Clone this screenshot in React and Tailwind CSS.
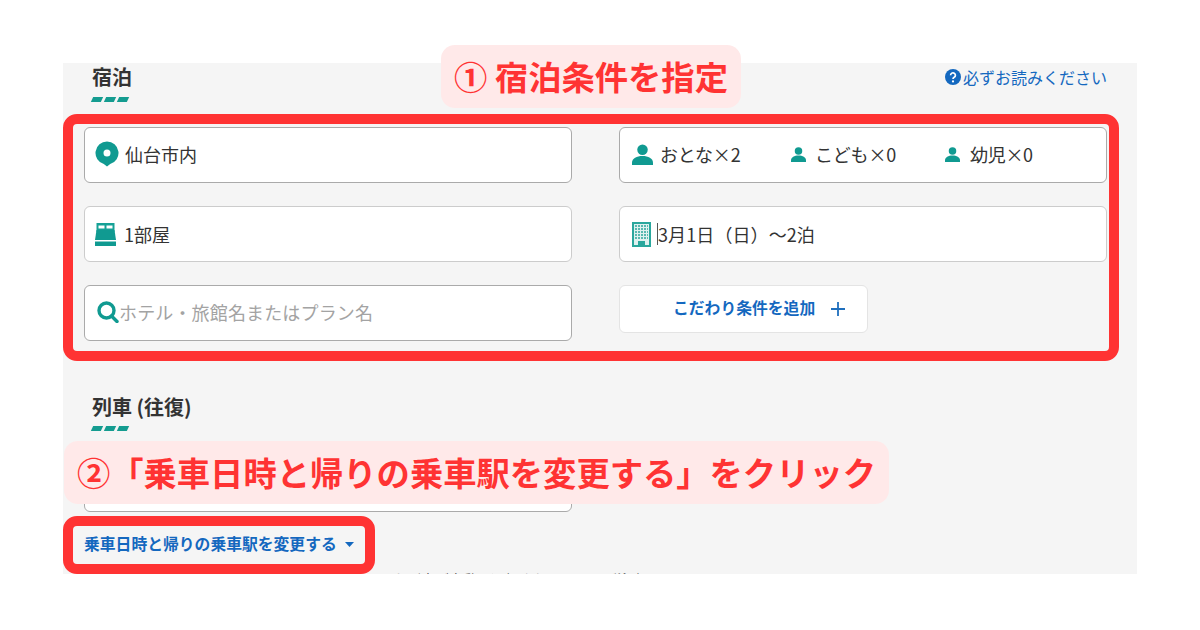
const jpFont = "font-['Noto_Sans_CJK_JP','Noto_Sans',sans-serif]";

const Bars = ({ className = "mt-[6px]" }) => (
  <div className={`flex gap-[3px] ml-2 ${className}`}>
    <span className="w-[10px] h-[5px] bg-[#149c90] -skew-x-[25deg]" />
    <span className="w-[10px] h-[5px] bg-[#149c90] -skew-x-[25deg]" />
    <span className="w-[10px] h-[5px] bg-[#149c90] -skew-x-[25deg]" />
  </div>
);

const Heading = ({ children }) => (
  <h2 className="ml-2 text-[20px] leading-[28px] font-bold text-[#333]">{children}</h2>
);

const Field = ({ children, className = "border-[#aaaaaa] pb-[2px]" }) => (
  <div className={`h-14 flex items-center rounded-[6px] border bg-white text-[18px] text-[#333] ${className}`}>
    {children}
  </div>
);

const PinIcon = () => (
  <svg width="24" height="26" viewBox="0 0 24 26" className="ml-[10px] shrink-0">
    <path fill="#109a91" fillRule="evenodd" d="M12 0.500a11.500 11.500 0 0 1 3.200 22.550L12 25.500l-3.200-2.450A11.500 11.500 0 0 1 12 0.500Zm0 8a3.500 3.500 0 1 0 0 7 3.500 3.500 0 0 0 0-7Z" />
  </svg>
);

const PersonIcon = ({ size }) => (
  <svg width={size} height={size} viewBox="0 0 22 22" className="shrink-0">
    <circle cx="11" cy="6" r="5.500" fill="#109a91" />
    <path fill="#109a91" d="M0 22v-2.500C0 15 5 12.500 11 12.500s11 2.500 11 7V22Z" />
  </svg>
);

const BedIcon = () => (
  <svg width="21" height="23" viewBox="0 0 21 23" className="ml-[10px] shrink-0">
    <path fill="#15a196" d="M1.500 0h18v9h-18Z" />
    <path fill="#fff" d="M3.500 2.500h6v3h-6ZM11.500 2.500h6v3h-6Z" />
    <path fill="#109a91" d="M1.500 7h18l1.500 10H0Z" />
    <path fill="#109a91" d="M0 18.500h21V23H0Z" />
  </svg>
);

const BuildingIcon = () => (
  <svg width="19" height="25" viewBox="0 0 19 25" className="ml-3 shrink-0">
    <path fill="#2aa79d" d="M0 0h19v25H0Z" />
    <path fill="#dff1ef" d="M2 2h15v21H2Z" />
    <path stroke="#58b8b0" strokeWidth="2" strokeDasharray="2 1" fill="none" d="M3 4h13M3 7h13M3 10h13M3 13h13M3 16h13" />
    <path fill="#2aa79d" d="M6 19h7v6H6Z" />
  </svg>
);

const SearchIcon = () => (
  <svg width="22" height="22" viewBox="0 0 22 22" fill="none" stroke="#109a91" className="ml-3 shrink-0">
    <circle cx="9.500" cy="9.500" r="7.500" strokeWidth="3.400" />
    <path d="M14.500 15l5.500 5.500" strokeWidth="3.400" strokeLinecap="round" />
  </svg>
);

const HelpIcon = () => (
  <svg width="16" height="16" viewBox="0 0 16 16" className="shrink-0">
    <circle cx="8" cy="8" r="8" fill="#1468bf" />
    <path d="M5.600 6.200a2.400 2.400 0 1 1 3.600 2.100c-.8.450-1.200.8-1.200 1.700" fill="none" stroke="#fff" strokeWidth="1.700" />
    <circle cx="8" cy="12.400" r="1.100" fill="#fff" />
  </svg>
);

export default function App() {
  return (
    <div className={`relative w-[1200px] h-[630px] overflow-hidden bg-white pt-[63px] pl-[63px] ${jpFont}`}>
      <section className="w-[1074px] h-[511px] overflow-hidden bg-[#f5f5f5] pl-[21px]">
        <div className="flex justify-between pr-[30px]">
          <Heading>宿泊</Heading>
          <a className="flex items-center gap-[2px] h-[28px] text-[16px] leading-[28px] text-[#1468bf]">
            <HelpIcon />
            必ずお読みください
          </a>
        </div>
        <Bars />

        <div className="grid grid-cols-[488px_488px] gap-x-[47px] gap-y-[23px] mt-[25px]">
          <Field>
            <PinIcon />
            <span className="ml-[6px]">仙台市内</span>
          </Field>
          <Field>
            <div className="flex items-center ml-3">
              <PersonIcon size={21} />
              <span className="ml-[7px] w-[131px] tracking-[-0.2px]">おとな×2</span>
              <PersonIcon size={15} />
              <span className="ml-[9px] w-[130px] tracking-[-0.2px]">こども×0</span>
              <PersonIcon size={15} />
              <span className="ml-[10px] tracking-[-0.3px]">幼児×0</span>
            </div>
          </Field>
          <Field className="border-[#cccccc]">
            <BedIcon />
            <span className="ml-2">1部屋</span>
          </Field>
          <Field className="border-[#cccccc]">
            <BuildingIcon />
            <span className="ml-[6px] w-px h-[22px] bg-[#555]" />
            <span className="tracking-[0.1px]">3月1日（日）〜2泊</span>
          </Field>
          <Field>
            <SearchIcon />
            <span className="text-[#a3a3a3] tracking-[0.15px]">ホテル・旅館名またはプラン名</span>
          </Field>
          <button className="self-start h-12 w-[249px] flex items-center pb-[3px] pl-[53px] rounded-[6px] border border-[#e4e4e4] bg-white text-[15.8px] font-bold text-[#1468bf]">
            こだわり条件を追加
            <svg width="14" height="14" viewBox="0 0 14 14" className="ml-4 mt-[2px]" stroke="#1f6fbd" strokeWidth="1.800">
              <path d="M0 7h14M7 0v14" />
            </svg>
          </button>
        </div>

        <div className="mt-[52px]">
          <Heading>列車 (往復)</Heading>
          <Bars className="mt-[5px]" />
        </div>
        <div className="w-[488px] mt-[25px]">
          <Field>
            <span />
          </Field>
        </div>
        <a className="flex items-center gap-2 mt-5 text-[15.8px] leading-6 font-bold text-[#1468bf]">
          乗車日時と帰りの乗車駅を変更する
          <svg width="9" height="5" viewBox="0 0 9 5">
            <path d="M0 0h9L4.500 5Z" fill="#1468bf" />
          </svg>
        </a>
        <p className="mt-[13px] ml-[15px] text-[14px] leading-5 text-[#555] whitespace-nowrap">
          乗車日時を変更しない場合は、宿泊日に合わせた列車が自動で選択されますのでご注意を。
        </p>
      </section>

      {/* annotations over the screenshot */}
      <div className="absolute left-[441px] top-[45px] w-[300px] h-[63px] flex items-center justify-center pb-[2px] rounded-[14px] bg-[#ffe9e9] text-[33.3px] font-bold text-[#ff3333]">
        ① 宿泊条件を指定
      </div>
      <div className="absolute left-[63px] top-[114px] w-[1056px] h-[247px] rounded-[14px] border-[10px] border-[#ff3333]" />
      <div className="absolute left-[64px] top-[441px] w-[825px] h-[63px] flex items-center justify-center pb-[2px] rounded-[14px] bg-[#ffe9e9] text-[33.3px] font-bold text-[#ff3333]">
        ②「乗車日時と帰りの乗車駅を変更する」をクリック
      </div>
      <div className="absolute left-[63px] top-[516px] w-[312px] h-[58px] rounded-[14px] border-[10px] border-[#ff3333]" />
    </div>
  );
}
